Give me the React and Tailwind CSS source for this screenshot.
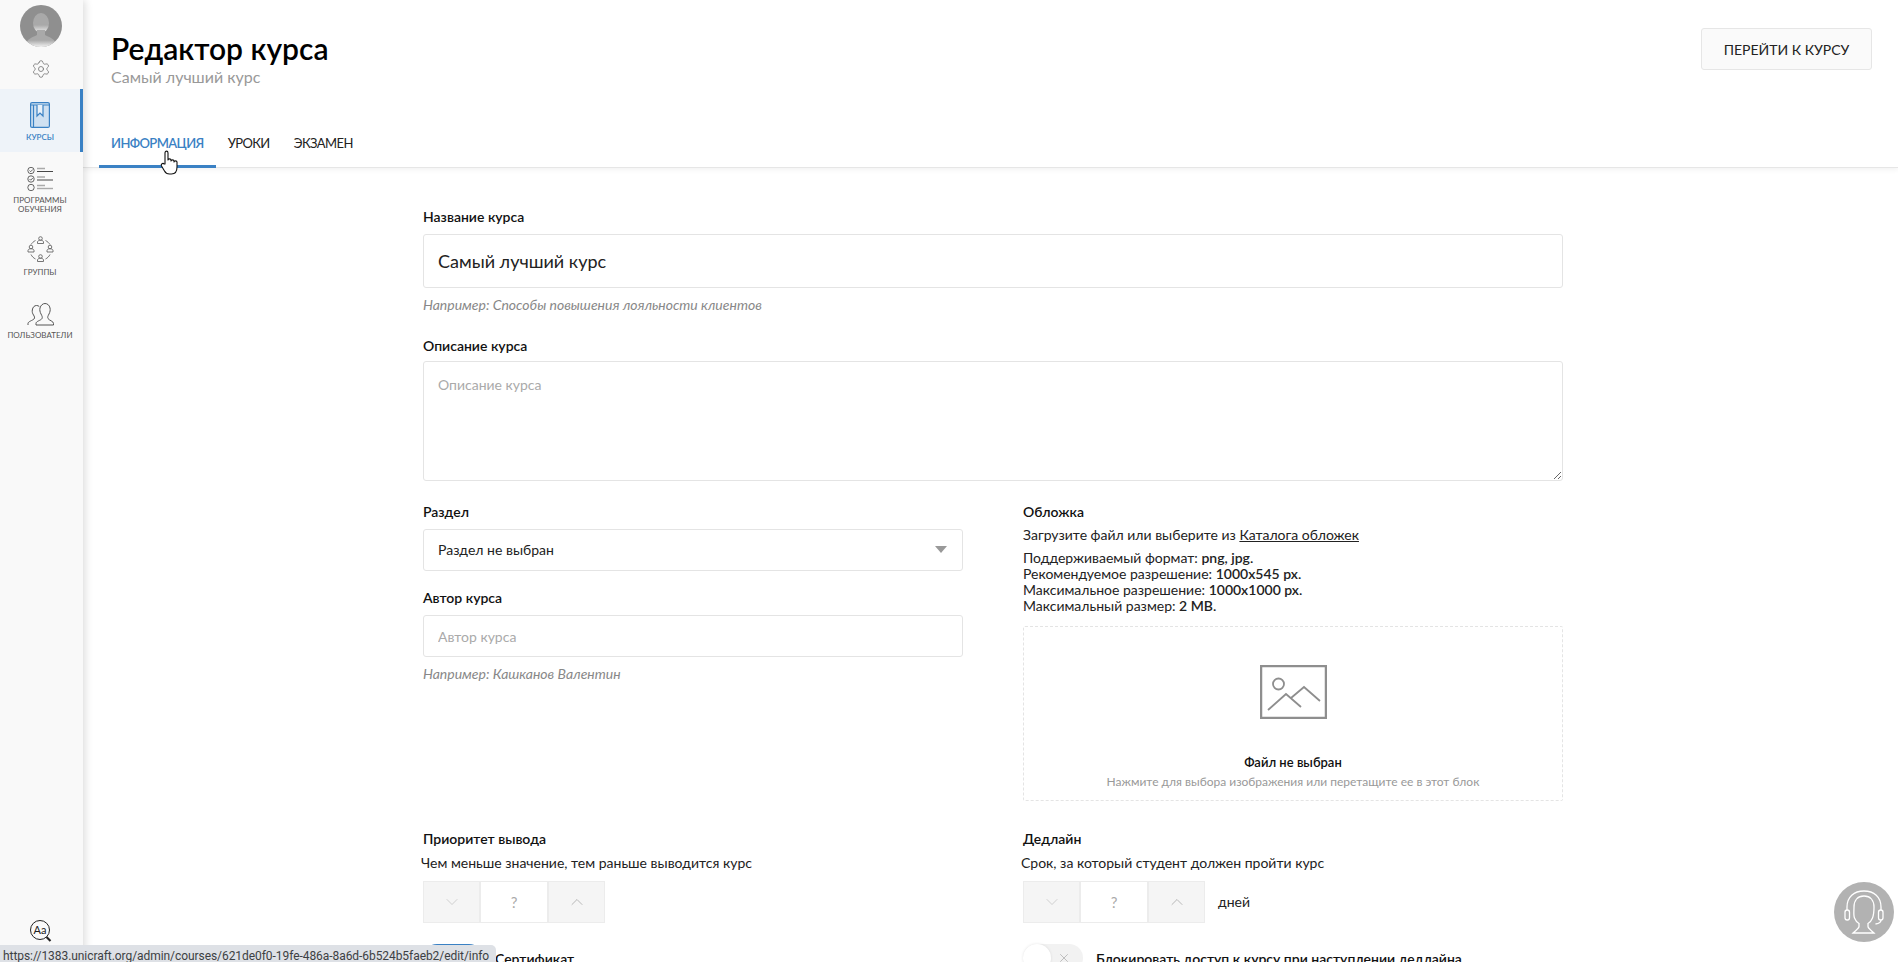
import React from 'react';
import { ChevronDown, ChevronUp, Settings, X } from 'lucide-react';

function BookIcon() {
  return (
    <svg width="20" height="26" viewBox="0 0 20 26" fill="none" stroke="#3a81c4" strokeWidth="1.200">
      <rect x="0.600" y="0.600" width="18.800" height="24.800" rx="1.500" fill="#cfe0f1" />
      <path d="M0.600 3h18.800M3.500 3v22.400" />
      <path d="M7 3v11l3-3 3 3V3" fill="#e9f1f9" />
    </svg>
  );
}

function ProgramsIcon() {
  return (
    <svg width="27" height="24" viewBox="0 0 27 24" fill="none" stroke="#555" strokeWidth="0.900">
      <circle cx="4" cy="3.500" r="3.200" />
      <path d="M2.500 3.500l1.200 1.200L5.800 2.500" />
      <circle cx="4" cy="12" r="3.200" />
      <path d="M2.500 12l1.200 1.200L5.800 11" />
      <circle cx="4" cy="20.500" r="3.200" />
      <path d="M10 1.500h8M10 10h8M10 18.500h8" stroke="#aaa" strokeWidth="1.400" />
      <path d="M10 4.500h16M10 13h16" stroke="#333" />
      <path d="M10 21.500h16" stroke="#aaa" strokeWidth="1.400" />
    </svg>
  );
}

function GroupsIcon() {
  const person = (x, y) => (
    <g key={`${x}-${y}`}>
      <circle cx={x} cy={y - 2} r="1.800" />
      <path d={`M${x - 3} ${y + 3}v-1.500c0-1 1.300-1.800 3-1.800s3 .8 3 1.800V${y + 3}z`} />
    </g>
  );
  return (
    <svg width="27" height="27" viewBox="0 0 27 27" fill="none" stroke="#666" strokeWidth="0.900">
      {person(13.500, 4.500)}
      {person(4, 13)}
      {person(23, 13)}
      {person(13.500, 22.500)}
      <path d="M8.500 4.500C6.500 5.500 5 7 4 8.500M18.500 4.500c2 1 3.500 2.500 4.500 4M4 18.500c1 2 2.500 3.500 4.500 4.500M23 18.500c-1 2-2.500 3.500-4.500 4.500" />
    </svg>
  );
}

function UsersIcon() {
  return (
    <svg width="27" height="24" viewBox="0 0 27 24" fill="none" stroke="#555" strokeWidth="1">
      <path d="M1 23v-1.500c0-2 4.500-3 6-4.500 1-1.200.5-2.500-.5-4-1-1.500-1.500-3-1.200-5C5.700 5 7.500 3.500 9.500 3.500c1 0 2 .3 2.800 1" />
      <path d="M9 23v-1.500c0-2.500 5-3 6-5 .7-1.500 0-2.500-1-4.500-1-2-1.500-4-1-6 .6-2.800 3-4.500 5-4.500 2.300 0 4.500 1.700 5 4.500.5 2 0 4-1 6s-1.700 3-1 4.500c1 2 5.500 2.500 5.500 5V23z" />
    </svg>
  );
}

function NavItem({ icon, label, active, className = '' }) {
  return (
    <div
      className={`flex flex-col items-center ${className} ${
        active ? 'bg-[#eef3f9] border-r-[3px] border-[#3a81c4] text-[#3a81c4] font-semibold' : 'pr-[3px] text-[#555]'
      }`}
    >
      {icon}
      <span className="text-[8px] leading-[9px] text-center uppercase mt-[5px] whitespace-pre-line">{label}</span>
    </div>
  );
}

function Sidebar() {
  return (
    <aside className="w-[83px] shrink-0 h-full flex flex-col bg-[#f9f9f9] shadow-[2px_0_8px_rgba(0,0,0,0.14)] z-10">
      <div className="flex flex-col items-center pt-[5px] pr-[2px]">
        <svg width="42" height="42" viewBox="0 0 42 42">
          <defs>
            <linearGradient id="av" x1="0" y1="0" x2="0" y2="1">
              <stop offset="0.6" stopColor="#a9a9a9" />
              <stop offset="1" stopColor="#f2f2f2" />
            </linearGradient>
            <clipPath id="avc">
              <circle cx="21" cy="21" r="21" />
            </clipPath>
          </defs>
          <circle cx="21" cy="21" r="21" fill="#8f8f8f" />
          <g clipPath="url(#avc)" fill="url(#av)">
            <ellipse cx="21" cy="18" rx="8" ry="10" />
            <path d="M17 25h8v5c3 2 11 3 12 12H5c1-9 9-10 12-12z" />
          </g>
        </svg>
        <Settings className="mt-[12px] text-[#777]" size={20} strokeWidth={1} />
      </div>
      <NavItem active icon={<div className="mt-[13px]"><BookIcon /></div>} label="Курсы" className="mt-[10px] h-[63px]" />
      <NavItem icon={<div className="mt-[15px]"><ProgramsIcon /></div>} label={'Программы\nобучения'} />
      <NavItem icon={<div className="mt-[22px]"><GroupsIcon /></div>} label="Группы" />
      <NavItem icon={<div className="mt-[25px]"><UsersIcon /></div>} label="Пользователи" />
      <div className="mt-auto mb-[19px] flex justify-center pr-[2px]">
        <svg width="24" height="24" viewBox="0 0 24 24" fill="none" stroke="#222">
          <circle cx="11" cy="11" r="9.500" strokeWidth="1" />
          <path d="M17.500 18l4 4" strokeWidth="2.200" />
          <text x="4.500" y="15" fontSize="11" fill="#222" stroke="none" className="font-['Lato',sans-serif]">Aa</text>
        </svg>
      </div>
    </aside>
  );
}

function Header() {
  return (
    <header className="relative h-[168px] shrink-0 border-b border-[#e6e6e6] shadow-[0_2px_5px_rgba(0,0,0,0.05)] pl-[16px] pr-[26px] flex flex-col">
      <div className="flex justify-between pt-[28px]">
        <div className="pl-[12px]">
          <h1 className="text-[30px] leading-[42px] font-semibold -mt-px text-black">Редактор курса</h1>
          <p className="text-[16px] leading-[16px] text-[#999]">Самый лучший курс</p>
        </div>
        <button className="w-[171px] h-[42px] bg-[#fafafa] border border-[#e6e6e6] rounded-[3px] text-[14px] text-[#222] uppercase">
          Перейти к курсу
        </button>
      </div>
      <nav className="flex mt-auto text-[13px] leading-[18px] tracking-[-0.6px] uppercase -mb-px">
        <div className="px-[12px] h-[46px] pt-[12px] border-b-[3px] border-[#3a81c4] text-[#3a81c4] font-semibold">Информация</div>
        <div className="px-[12px] h-[46px] pt-[12px] text-[#222]">Уроки</div>
        <div className="px-[12px] h-[46px] pt-[12px] text-[#222]">Экзамен</div>
      </nav>
    </header>
  );
}

function Label({ children, className = '' }) {
  return <div className={`text-[14px] leading-[18px] font-semibold text-[#111] ${className}`}>{children}</div>;
}

function Hint({ children }) {
  return <div className="text-[14px] leading-[18px] mt-[8px] italic text-[#888]">{children}</div>;
}

const inputCls =
  'block w-full border border-[#e4e4e4] rounded-[3px] px-[14px] outline-none text-[#222] placeholder:text-[#aaa] bg-white';

function Stepper() {
  return (
    <div className="flex w-[182px] h-[42px] border border-[#ececec] text-[#bbb]">
      <div className="w-[55px] bg-[#f5f5f5] flex items-center justify-center">
        <ChevronDown size={20} strokeWidth={0.8} />
      </div>
      <div className="flex-1 border-x-2 border-[#ececec] flex items-center justify-center text-[15px] text-[#aaa]">?</div>
      <div className="w-[55px] bg-[#f5f5f5] flex items-center justify-center text-[#999]">
        <ChevronUp size={20} strokeWidth={0.8} />
      </div>
    </div>
  );
}

function Dropzone() {
  return (
    <div className="mt-[12px] h-[175px] border border-dashed border-[#e4e4e4] rounded-[2px] flex flex-col items-center">
      <svg className="mt-[38px]" width="67" height="54" viewBox="0 0 67 54" fill="none" stroke="#8e8e8e">
        <rect x="1" y="1" width="65" height="52" strokeWidth="2.500" />
        <circle cx="18.500" cy="19" r="5.500" strokeWidth="1.800" />
        <path d="M8 45l18-16 15 13M31 33l13-11 16 14" strokeWidth="1.800" />
      </svg>
      <div className="mt-[34px] text-[13px] leading-[18px] font-semibold text-[#111]">Файл не выбран</div>
      <div className="mt-[2px] text-[12px] leading-[18px] text-[#999]">Нажмите для выбора изображения или перетащите ее в этот блок</div>
    </div>
  );
}

function CourseForm() {
  return (
    <div className="w-[1140px] ml-[340px] pt-[40px]">
      <Label>Название курса</Label>
      <input className={`${inputCls} mt-[8px] h-[54px] text-[18px]`} defaultValue="Самый лучший курс" />
      <Hint>Например: Способы повышения лояльности клиентов</Hint>

      <Label className="mt-[23px]">Описание курса</Label>
      <textarea className={`${inputCls} mt-[6px] h-[120px] pt-[13px] text-[14px] leading-[20px]`} placeholder="Описание курса" />

      <div className="grid grid-cols-2 gap-x-[60px] mt-[22px]">
        <div>
          <Label>Раздел</Label>
          <div className="mt-[8px] h-[42px] border border-[#e4e4e4] rounded-[3px] pl-[14px] pr-[15px] pb-[2px] flex items-center justify-between text-[14px] text-[#222]">
            <span>Раздел не выбран</span>
            <span className="w-0 h-0 border-x-[6px] border-x-transparent border-t-[7px] border-t-[#999]" />
          </div>
          <Label className="mt-[18px]">Автор курса</Label>
          <input className={`${inputCls} mt-[8px] h-[42px] text-[14px]`} placeholder="Автор курса" />
          <Hint>Например: Кашканов Валентин</Hint>
        </div>
        <div>
          <Label>Обложка</Label>
          <div className="mt-[5px] text-[14px] leading-[18px] text-[#222]">
            Загрузите файл или выберите из <span className="underline">Каталога обложек</span>
          </div>
          <div className="mt-[6px] text-[14px] leading-[16px] text-[#222]">
            <div>Поддерживаемый формат: <span className="font-semibold">png, jpg.</span></div>
            <div>Рекомендуемое разрешение: <span className="font-semibold">1000x545 px.</span></div>
            <div>Максимальное разрешение: <span className="font-semibold">1000x1000 px.</span></div>
            <div>Максимальный размер: <span className="font-semibold">2 MB.</span></div>
          </div>
          <Dropzone />
        </div>
      </div>

      <div className="grid grid-cols-2 gap-x-[60px] mt-[29px]">
        <div>
          <Label>Приоритет вывода</Label>
          <div className="mt-[6px] -ml-[2px] text-[14px] leading-[18px] text-[#222]">Чем меньше значение, тем раньше выводится курс</div>
          <div className="mt-[9px]"><Stepper /></div>
          <div className="mt-[21px] flex items-center gap-[12px]">
            <div className="w-[60px] h-[28px] rounded-full bg-[#3a81c4]" />
            <span className="text-[14px] font-semibold text-[#111]">Сертификат</span>
          </div>
        </div>
        <div>
          <Label>Дедлайн</Label>
          <div className="mt-[6px] -ml-[2px] text-[14px] leading-[18px] text-[#222]">Срок, за который студент должен пройти курс</div>
          <div className="mt-[9px] flex items-center gap-[13px]">
            <Stepper />
            <span className="text-[14px] text-[#222] -mt-[2px]">дней</span>
          </div>
          <div className="mt-[21px] flex items-center gap-[13px]">
            <div className="w-[60px] h-[28px] rounded-full bg-[#f2f2f2] flex items-center justify-end pr-[12px] relative">
              <span className="absolute left-0 top-0 w-[28px] h-[28px] rounded-full bg-white shadow-[0_0_3px_rgba(0,0,0,0.1)]" />
              <X size={14} strokeWidth={1} className="text-[#999]" />
            </div>
            <span className="text-[14px] font-semibold text-[#111]">Блокировать доступ к курсу при наступлении дедлайна</span>
          </div>
        </div>
      </div>
    </div>
  );
}

export default function App() {
  return (
    <div className="relative flex w-[1898px] h-[962px] overflow-hidden bg-white font-['Lato',sans-serif]">
      <Sidebar />
      <main className="flex-1 min-w-0 flex flex-col">
        <Header />
        <CourseForm />
      </main>

      {/* hand cursor from the screenshot */}
      <svg className="absolute left-[160px] top-[150px] z-20" width="21" height="26" viewBox="0 0 21 26" fill="#fff" stroke="#111" strokeWidth="1.100" strokeLinejoin="round">
        <path d="M5 14V3c0-2.500 3-2.500 3 0v7c0-1.500 3-1.500 3 0v1c0-1.500 3-1.500 3 0v1c0-1.500 3-1.500 3 0v5c0 4-2 7-5.500 7h-2c-2.500 0-4-1-5-3l-3-5c-1-2 1.500-3.500 2.500-2z" />
      </svg>

      {/* support button */}
      <div className="absolute left-[1834px] top-[882px] z-20 w-[60px] h-[60px] rounded-full bg-[#b2b2b2]">
        <svg width="60" height="60" viewBox="0 0 60 60" fill="none" stroke="#fff" strokeWidth="1.300">
          <path d="M13 28V25C13 15 20 9 30 9s17 6 17 16v3" />
          <rect x="11" y="28" width="4.500" height="10" rx="2.200" />
          <rect x="44.500" y="28" width="4.500" height="10" rx="2.200" />
          <path d="M47 38c0 2-2 3.500-5.500 4" />
          <path d="M30 14c6.500 0 10 4.500 10 11 0 4-.3 8-1.500 11-1 2.500-2.500 4.500-4.500 5.500v3c0 2 3 3.500 6 6.500H19c3-3 6-4.500 6-6.500v-3c-2-1-3.500-3-4.500-5.500C19.300 33 20 29 20 25c0-6.500 3.500-11 10-11z" />
        </svg>
      </div>

      {/* browser status bar */}
      <div className="absolute left-0 bottom-0 z-30 w-[496px] h-[17px] pl-[3px] bg-[#dee1e6] rounded-tr-[5px] overflow-hidden font-['Roboto',sans-serif] text-[12px] leading-[23px] tracking-[-0.06px] text-[#3c4043] whitespace-nowrap">
        https://1383.unicraft.org/admin/courses/621de0f0-19fe-486a-8a6d-6b524b5faeb2/edit/info
      </div>
    </div>
  );
}
